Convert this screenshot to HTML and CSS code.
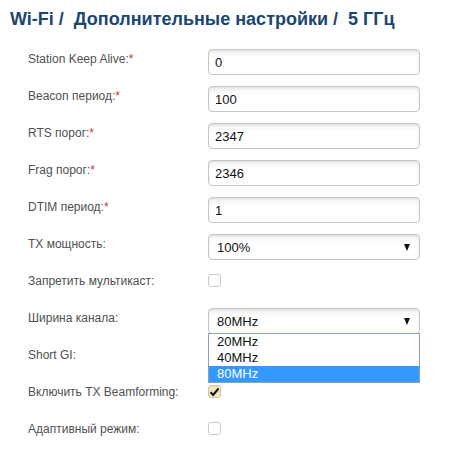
FILE: index.html
```html
<!DOCTYPE html>
<html>
<head>
    <meta charset="UTF-8">
    <title>Wi-Fi - Дополнительные настройки</title>
    <link rel="stylesheet" href="styles.css">
</head>
<body>
    <!-- Breadcrumb title -->
    <h1 class="page-title">Wi-Fi /&nbsp; Дополнительные настройки /&nbsp; 5 ГГц</h1>

    <!-- Advanced settings form -->
    <form class="settings">
        <div class="row">
            <label>Station Keep Alive:<span class="req">*</span></label>
            <input type="text" value="0" />
        </div>
        <div class="row">
            <label>Beacon период:<span class="req">*</span></label>
            <input type="text" value="100" />
        </div>
        <div class="row">
            <label>RTS порог:<span class="req">*</span></label>
            <input type="text" value="2347" />
        </div>
        <div class="row">
            <label>Frag порог:<span class="req">*</span></label>
            <input type="text" value="2346" />
        </div>
        <div class="row">
            <label>DTIM период:<span class="req">*</span></label>
            <input type="text" value="1" />
        </div>
        <div class="row">
            <label>TX мощность:</label>
            <div class="select"><span>100%</span><i class="arrow"></i></div>
        </div>
        <div class="row">
            <label>Запретить мультикаст:</label>
            <span class="check"></span>
        </div>
        <div class="row">
            <label>Ширина канала:</label>
            <div class="select open">
                <span>80MHz</span><i class="arrow"></i>
                <!-- open dropdown list -->
                <ul class="options">
                    <li>20MHz</li>
                    <li>40MHz</li>
                    <li class="selected">80MHz</li>
                </ul>
            </div>
        </div>
        <div class="row">
            <label>Short GI:</label>
            <span class="check"></span>
        </div>
        <div class="row">
            <label>Включить TX Beamforming:</label>
            <span class="check checked">
                <svg width="11" height="10" viewBox="0 0 11 10"><path d="M1.5 5.2 L4.2 8 L9.5 1.5" fill="none" stroke="#111" stroke-width="2"/></svg>
            </span>
        </div>
        <div class="row">
            <label>Адаптивный режим:</label>
            <span class="check"></span>
        </div>
    </form>
</body>
</html>
```

FILE: styles.css
```css
body {
    margin: 0;
    font-family: "Liberation Sans", Arial, sans-serif;
    background: #fff;
}

.page-title {
    margin: 8px 0 0 10px;
    font-size: 18px;
    line-height: 22px;
    font-weight: bold;
    color: #1b4670;
}

/* Form rows: label column + control column */
.settings {
    margin-top: 19px;
    padding-left: 28px;
    display: flex;
    flex-direction: column;
    gap: 11px;
}

.row {
    display: flex;
    align-items: flex-start;
    height: 26px;
}

.row label {
    width: 180px;
    font-size: 12px;
    line-height: 20px;
    color: #505050;
}

.req {
    color: #c0392b;
}

input, .select {
    box-sizing: border-box;
    width: 212px;
    height: 26px;
    padding: 0 6px;
    border: 1px solid #c6c6c6;
    border-radius: 4px;
    background: linear-gradient(#f0f0f0, #fff 8px);
    box-shadow: inset 0 1px 2px rgba(0, 0, 0, 0.08);
    font-family: "Liberation Sans", Arial, sans-serif;
    font-size: 13px;
    color: #111;
}

.select {
    position: relative;
    display: flex;
    align-items: center;
    justify-content: space-between;
    padding: 0 8px;
}

.arrow {
    width: 0;
    height: 0;
    border-left: 3.5px solid transparent;
    border-right: 3.5px solid transparent;
    border-top: 7px solid #111;
    margin-right: 1px;
}

/* Dropdown list drawn over the rows below */
.options {
    position: absolute;
    top: 24px;
    left: -1px;
    width: 212px;
    box-sizing: border-box;
    margin: 0;
    padding: 0;
    list-style: none;
    background: #fff;
    border: 1px solid #8aa0c0;
    z-index: 2;
}

.options li {
    height: 16px;
    line-height: 16px;
    padding-left: 8px;
    font-size: 13px;
    color: #111;
}

.options li.selected {
    background: #3399ff;
    color: #fff;
}

/* Checkboxes */
.check {
    box-sizing: border-box;
    width: 13px;
    height: 13px;
    margin-top: 3px;
    border: 1px solid #c9c9c9;
    border-radius: 3px;
    background: #fff;
    display: flex;
    align-items: center;
    justify-content: center;
}

.check.checked {
    background: #f5e4c3;
    border-color: #d8c39a;
}
```
